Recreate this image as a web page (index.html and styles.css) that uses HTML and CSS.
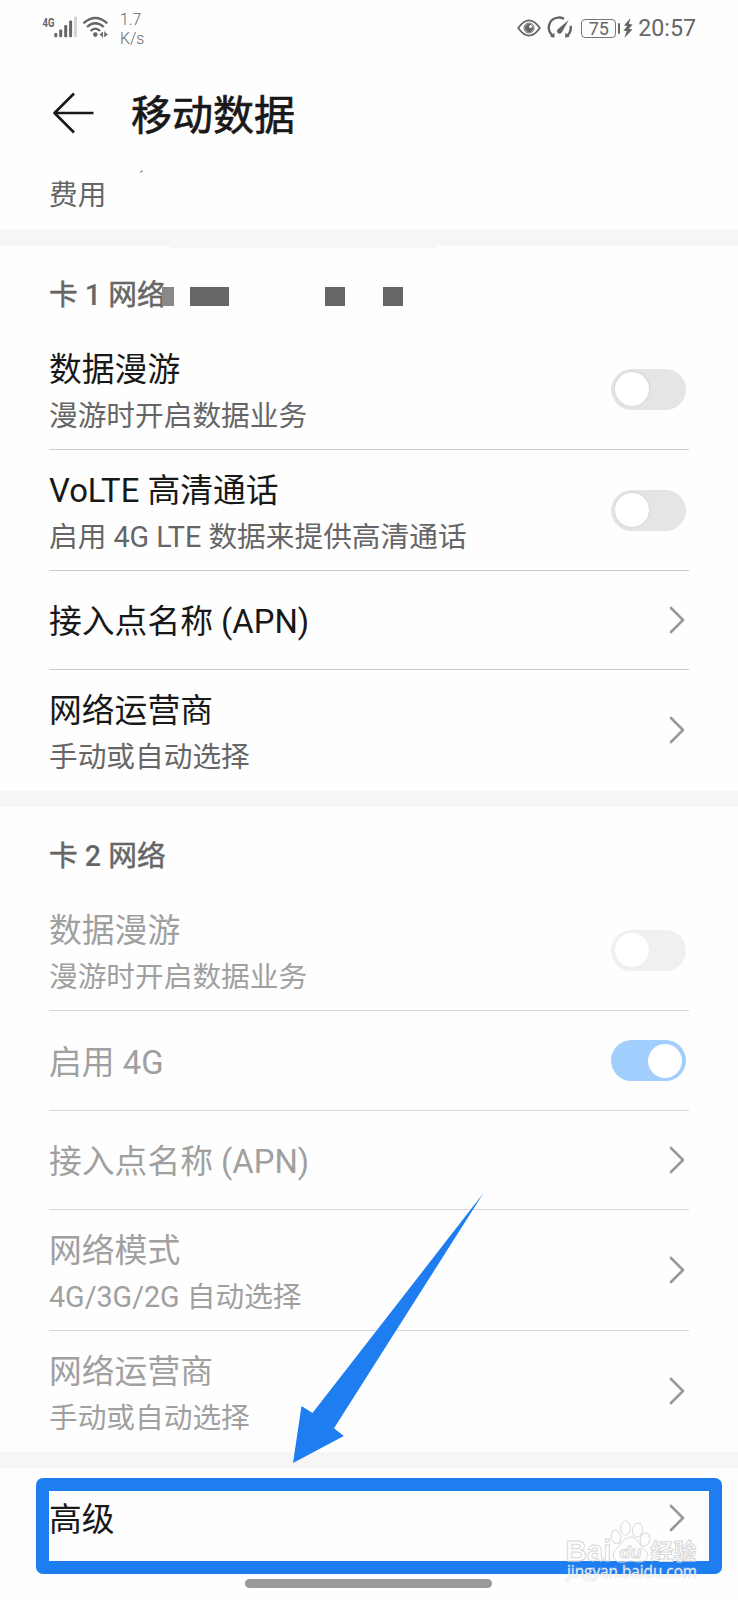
FILE: index.html
```html
<!DOCTYPE html>
<html lang="zh-CN">
<head>
<meta charset="utf-8">
<title>移动数据</title>
<link rel="stylesheet" href="styles.css">
</head>
<body>
<div class="screen">
  <header class="status">
    <div class="status-left">
      <svg class="signal" width="36" height="24" viewBox="0 0 36 24">
        <text class="net" x="0.5" y="11.8" textLength="12" lengthAdjust="spacingAndGlyphs">4G</text>
        <g fill="#666">
          <rect x="12.3" y="18" width="3" height="4.3" rx="1"/>
          <rect x="17.2" y="14.5" width="3" height="7.8" rx="1"/>
          <rect x="22.2" y="10" width="3" height="12.3" rx="1"/>
          <rect x="27.1" y="5.5" width="3" height="16.8" rx="1"/>
          <rect x="32" y="1.5" width="3" height="20.8" rx="1" fill="#d5d5d5"/>
        </g>
      </svg>
      <svg class="wifi" width="28" height="24" viewBox="0 0 28 24">
        <g fill="none" stroke="#666" stroke-width="2.3">
          <path d="M1.4 8.3Q13.3-2.2 25.3 8.3"/>
          <path d="M5 12Q13.3 4.6 21.7 12"/>
          <path d="M8.6 16Q13.3 11.3 18 16"/>
        </g>
        <circle cx="13.3" cy="19.6" r="2.3" fill="#666"/>
        <path d="M20.4 17v5.5M22.9 16.500v5.500" stroke="#666" stroke-width="1.2"/>
        <path d="M20.6 17.600v4l-3.400-2zM22.700 17.400v4l3.400-2z" fill="#666"/>
      </svg>
      <div class="speed"><span>1.7</span><span>K/s</span></div>
    </div>
    <div class="status-right">
      <svg width="24" height="20" viewBox="0 0 24 20">
        <path d="M1.2 10Q12-5.4 22.8 10Q12 25.4 1.2 10z" fill="none" stroke="#666" stroke-width="1.8"/>
        <circle cx="12" cy="10" r="4.2" fill="#666"/>
        <circle cx="13.6" cy="8.4" r="1.5" fill="#fff"/>
        <circle cx="12" cy="10" r="5" fill="none" stroke="#666" stroke-width="1"/>
      </svg>
      <svg class="gauge" width="26" height="24" viewBox="0 0 26 24">
        <path d="M5.8 19.8C-1.2 13.5 1.5 2.2 11.3 1.6Q14 1.4 17 2.8" fill="none" stroke="#666" stroke-width="2.4"/>
        <path d="M23.5 9.8Q25 15 20.2 19.8" fill="none" stroke="#666" stroke-width="2.4"/>
        <path d="M21.8 4L15 16A2.6 2.6 0 1 1 11 13z" fill="#666"/>
        <path d="M3 20.8l4.5-4v5zM22.7 20.8l-4.5-4v5z" fill="#666"/>
      </svg>
      <div class="battery">75</div>
      <div class="battery-nub"></div>
      <svg class="bolt" width="10" height="20" viewBox="0 0 10 20">
        <path d="M7.6 0L1 7.6l3.3.5L.3 12.7l3.4.4L1.4 20 9.4 11.4 6 10.8 9.6 6.6 5.9 6z" fill="#666"/>
      </svg>
      <time class="clock">20:57</time>
    </div>
  </header>

  <div class="titlebar">
    <svg class="back" width="42" height="44" viewBox="0 0 42 44">
      <path d="M21 2.500L1.500 22l19.500 19.500M1.500 22h39" fill="none" stroke="#181818" stroke-width="2.6" stroke-linejoin="round"/>
    </svg>
    <h1 class="title">移动数据</h1>
  </div>
  <div class="cost">费用<i class="speck"></i></div>

  <div class="band band-first"><i class="bump-top"></i><i class="bump-bottom"></i></div>

  <section>
    <h2 class="group">卡 <b>1</b> 网络
      <i class="mosaic mosaic-a"></i><i class="mosaic mosaic-b"></i><i class="mosaic mosaic-c"></i><i class="mosaic mosaic-d"></i>
    </h2>
    <div class="row double">
      <div class="label"><div class="name">数据漫游</div><div class="desc">漫游时开启数据业务</div></div>
      <span class="toggle"></span>
    </div>
    <div class="row double">
      <div class="label"><div class="name">VoLTE 高清通话</div><div class="desc">启用 4G LTE 数据来提供高清通话</div></div>
      <span class="toggle"></span>
    </div>
    <div class="row">
      <div class="label"><div class="name">接入点名称 (APN)</div></div>
      <svg class="chevron" viewBox="0 0 16 28"><path d="M2 2l12 12L2 26"/></svg>
    </div>
    <div class="row double last">
      <div class="label"><div class="name">网络运营商</div><div class="desc">手动或自动选择</div></div>
      <svg class="chevron" viewBox="0 0 16 28"><path d="M2 2l12 12L2 26"/></svg>
    </div>
  </section>

  <div class="band"></div>

  <section class="disabled">
    <h2 class="group">卡 <b>2</b> 网络</h2>
    <div class="row double">
      <div class="label"><div class="name">数据漫游</div><div class="desc">漫游时开启数据业务</div></div>
      <span class="toggle"></span>
    </div>
    <div class="row tall">
      <div class="label"><div class="name">启用 4G</div></div>
      <span class="toggle on"></span>
    </div>
    <div class="row">
      <div class="label"><div class="name">接入点名称 (APN)</div></div>
      <svg class="chevron" viewBox="0 0 16 28"><path d="M2 2l12 12L2 26"/></svg>
    </div>
    <div class="row double">
      <div class="label"><div class="name">网络模式</div><div class="desc">4G/3G/2G 自动选择</div></div>
      <svg class="chevron" viewBox="0 0 16 28"><path d="M2 2l12 12L2 26"/></svg>
    </div>
    <div class="row double last">
      <div class="label"><div class="name">网络运营商</div><div class="desc">手动或自动选择</div></div>
      <svg class="chevron" viewBox="0 0 16 28"><path d="M2 2l12 12L2 26"/></svg>
    </div>
  </section>

  <div class="band"></div>

  <div class="row last advanced">
    <div class="label"><div class="name">高级</div></div>
    <svg class="chevron" viewBox="0 0 16 28"><path d="M2 2l12 12L2 26"/></svg>
  </div>
  <div class="home"></div>

  <div class="highlight"></div>
  <svg class="arrow" width="192" height="272" viewBox="0 0 192 272">
    <path d="M191.5 1L20.5 221 9.5 214 1 271 51.8 244 42 236.300z" fill="#1d7df1"/>
  </svg>
  <svg class="watermark" width="144" height="68" viewBox="0 0 144 68">
    <g class="wm-outline">
      <text class="wm-bai" x="3.500" y="45" textLength="46" lengthAdjust="spacingAndGlyphs">Bai</text>
      <ellipse cx="54" cy="21" rx="4.800" ry="6.800" transform="rotate(-12 54 21)"/>
      <ellipse cx="63.500" cy="12" rx="5" ry="7"/>
      <ellipse cx="75.500" cy="14" rx="5" ry="7" transform="rotate(10 75.500 14)"/>
      <ellipse cx="83" cy="23.500" rx="4.800" ry="6.800" transform="rotate(14 83 23.500)"/>
      <path d="M69 21C75 21 77 29 82 33C89 38 86 46 77 46C73 46 72 45 68.500 45C65 45 62 47 57 46C50 44 50 37 54 33C59 29 62 21 69 21z"/>
      <text class="wm-du" x="57.500" y="42" textLength="22" lengthAdjust="spacingAndGlyphs">du</text>
      <text class="wm-cjk" x="88.500" y="43" textLength="46" lengthAdjust="spacingAndGlyphs">经验</text>
    </g>
    <text class="wm-url" x="5" y="60.500" textLength="130" lengthAdjust="spacingAndGlyphs">jingyan.baidu.com</text>
  </svg>
</div>
</body>
</html>
```

FILE: styles.css
```css
* { box-sizing: border-box; }

body {
  margin: 0;
  background: #fefefe;
  font-family: Roboto, "Noto Sans CJK SC", sans-serif;
  color: #181818;
}

.screen {
  position: relative;
  width: 738px;
  height: 1600px;
  overflow: hidden;
}

svg { display: block; flex: none; }

/* status bar */
.status {
  display: flex;
  justify-content: space-between;
  height: 80px;
  padding: 0 42px 0 42px;
  color: #666;
}
.status-left { display: flex; align-items: flex-start; }
.signal { margin-top: 15px; }
.net { font: bold 13.5px Roboto, sans-serif; fill: #666; }
.wifi { margin: 15px 0 0 4px; }
.speed {
  display: flex;
  flex-direction: column;
  margin: 10px 0 0 10px;
  font-size: 15.8px;
  font-weight: 350;
  line-height: 19px;
}
.status-right { display: flex; align-items: center; height: 56px; }
.gauge { margin-left: 6px; }
.battery {
  width: 35px;
  height: 19px;
  margin-left: 8px;
  border: 1.5px solid #777;
  border-radius: 4px;
  font-size: 18px;
  line-height: 17px;
  text-align: center;
}
.battery-nub { width: 2.5px; height: 11px; margin-left: 1.5px; border-radius: 1px; background: #666; }
.bolt { margin: 0 5px 0 3px; }
.clock { font-size: 23.2px; line-height: 28px; }

/* page title */
.titlebar { display: flex; align-items: center; height: 66px; padding-left: 53px; }
.title {
  margin: 0 0 0 36px;
  padding-top: 6px;
  font-size: 41px;
  font-weight: 400;
  line-height: 60px;
  -webkit-text-stroke: 0.7px #181818;
}
.cost {
  position: relative;
  height: 84px;
  padding: 29px 0 0 49px;
  font-size: 28.7px;
  line-height: 40px;
  color: #666;
}
.speck {
  position: absolute;
  left: 140px;
  top: 25px;
  width: 3px;
  height: 1px;
  background: #777;
  transform: rotate(-30deg);
}

.band { height: 16px; background: #f6f6f6; }
.band-first { position: relative; }
.bump-top, .bump-bottom { position: absolute; height: 2px; background: #f6f6f6; }
.bump-top { left: 187px; width: 225px; top: -1px; opacity: 0.5; }
.bump-bottom { left: 170px; width: 267px; top: 16px; }

/* groups and rows */
.group {
  position: relative;
  height: 83px;
  margin: 0;
  padding: 29px 0 0 49px;
  font-size: 28.7px;
  font-weight: 400;
  line-height: 40px;
  color: #666;
  -webkit-text-stroke: 0.5px #666;
}
.group b { font-weight: 500; -webkit-text-stroke: 0; }
.mosaic { position: absolute; top: 41px; height: 19px; background: #666; }
.mosaic-a { left: 162px; width: 12px; background: #888; }
.mosaic-b { left: 190px; width: 39px; }
.mosaic-c { left: 325px; width: 20px; }
.mosaic-d { left: 383px; width: 20px; }

.row {
  display: flex;
  align-items: center;
  justify-content: space-between;
  height: 99px;
  margin: 0 49px;
  border-bottom: 1px solid #cbcbcb;
}
.row.double { height: 121px; }
.row.tall { height: 100px; }
.row.last { border-bottom-color: transparent; }
.label { padding-top: 4px; }
.name { font-size: 32.8px; line-height: 50px; }
.desc { font-size: 28.7px; line-height: 42px; color: #666; }

.toggle {
  display: flex;
  width: 75px;
  height: 41px;
  margin-right: 3.5px;
  padding: 3.5px 4px;
  border-radius: 21px;
  background: #e5e5e5;
}
.toggle::before {
  content: "";
  width: 34px;
  height: 34px;
  border-radius: 50%;
  background: #fff;
  box-shadow: 0 0 3px rgba(0, 0, 0, 0.12);
}
.toggle.on { justify-content: flex-end; }

.chevron { width: 16px; height: 28px; margin-right: 4px; }
.chevron path {
  fill: none;
  stroke: #999;
  stroke-width: 2.6;
  stroke-linecap: round;
  stroke-linejoin: round;
}
.advanced { padding-top: 1px; }

.disabled .name, .disabled .desc { color: #a0a0a0; }
.disabled .row { border-bottom-color: #d8d8d8; }
.disabled .row.last { border-bottom-color: transparent; }
.disabled .toggle { background: #f0f0f0; }
.disabled .toggle::before { box-shadow: none; }
.disabled .toggle.on { background: #a2cefd; }

.home {
  width: 247px;
  height: 9px;
  margin: 12px 0 0 245px;
  border-radius: 5px;
  background: #999;
}

/* annotations drawn over the list */
.highlight {
  position: absolute;
  left: 36px;
  top: 1478px;
  width: 686px;
  height: 96px;
  border: 13px solid #1d7df1;
  border-radius: 7px;
}
.arrow { position: absolute; left: 292px; top: 1192px; }
.watermark { position: absolute; left: 562px; top: 1516px; }
.wm-outline { fill: rgba(255, 255, 255, 0.3); stroke: #d8d8d8; stroke-width: 1; }
.wm-bai { font: bold 30px "Liberation Sans", sans-serif; }
.wm-du { font: italic bold 17px "Liberation Sans", sans-serif; }
.wm-cjk { font: bold 22px "Noto Sans CJK SC", sans-serif; }
.wm-url {
  font: 15.5px "Open Sans", sans-serif;
  fill: rgba(255, 255, 255, 0.85);
  stroke: rgba(190, 190, 190, 0.4);
  stroke-width: 1.4;
  paint-order: stroke;
}
```
